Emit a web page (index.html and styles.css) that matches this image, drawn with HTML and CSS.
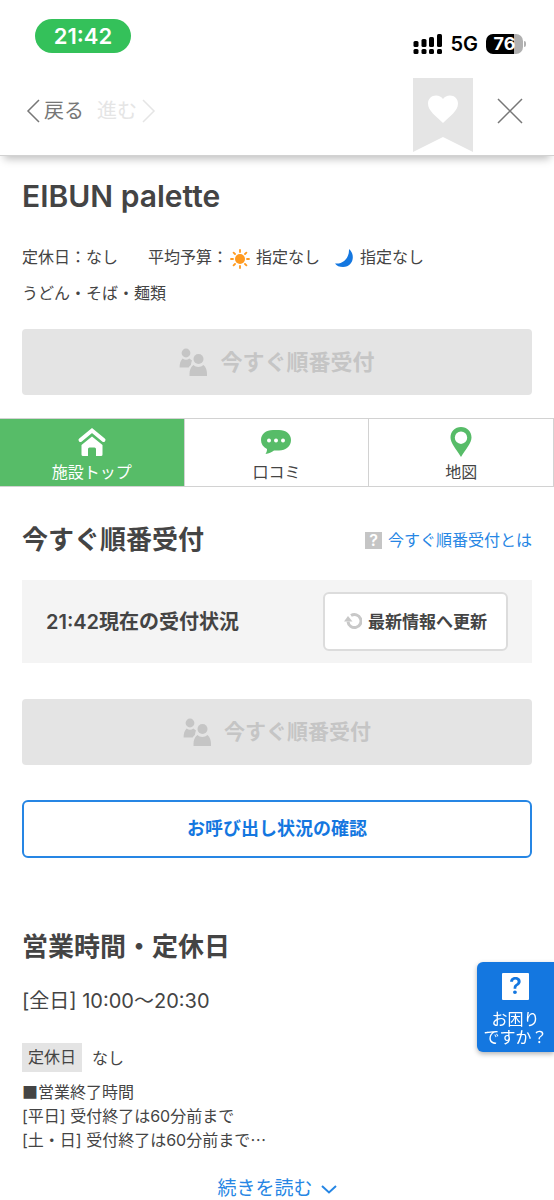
FILE: index.html
```html
<!DOCTYPE html>
<html lang="ja">
<head>
<meta charset="utf-8">
<meta name="viewport" content="width=device-width, initial-scale=1">
<title>EIBUN palette</title>
<link rel="stylesheet" href="styles.css">
</head>
<body>
<svg class="defs" aria-hidden="true">
  <symbol id="people" viewBox="0 0 28 28">
    <circle cx="7" cy="5" r="4.4"/>
    <path d="M.6 19.500c0-4 .9-7 3-9a5.500 5.500 0 0 0 6.800 0l2.600 2c-1 2.200-.8 4-1.200 4.500-1 .8-1.600 1.500-2.200 2.500z"/>
    <circle cx="19.500" cy="11" r="5"/>
    <path d="M10.500 28v-2c0-3.700 1.200-6.800 3.800-9a7.700 7.700 0 0 0 10.200 0c2.500 2.200 3.500 5.300 3.500 9v2z"/>
  </symbol>
</svg>
<header class="header">
  <div class="status">
    <span class="clock">21:42</span>
    <div class="signals">
      <svg width="30" height="21" viewBox="0 0 30 21" aria-hidden="true">
        <rect x="0.500" y="7" width="5" height="6" rx="1.500"/><rect x="8.500" y="5" width="5" height="8" rx="1.500"/><rect x="16" y="3" width="5" height="10" rx="1.500"/><rect x="24" y="0" width="5" height="13" rx="1.500"/>
        <rect x="0.500" y="15" width="5" height="5" rx="1.500"/><rect x="8.500" y="15" width="5" height="5" rx="1.500"/><rect x="16" y="15" width="5" height="5" rx="1.500"/><rect x="24" y="15" width="5" height="5" rx="1.500"/>
      </svg>
      <span class="network">5G</span>
      <span class="battery">76</span>
      <span class="battery-cap"></span>
    </div>
  </div>
  <nav class="toolbar" aria-label="ブラウザ操作">
    <button class="nav-button" type="button">
      <svg width="14" height="24" viewBox="0 0 14 24" aria-hidden="true"><path d="M13 1 2 12l11 11"/></svg>戻る
    </button>
    <button class="nav-button nav-forward" type="button" disabled>進む<svg width="14" height="24" viewBox="0 0 14 24" aria-hidden="true"><path d="m1 1 11 11L1 23"/></svg>
    </button>
    <button class="bookmark" type="button" aria-label="お気に入り">
      <svg width="60" height="74" viewBox="0 0 60 74" aria-hidden="true">
        <path fill="#e5e5e5" d="M0 0h60v74L30 59 0 74z"/>
        <path fill="#fff" d="M30 45C23 38 15 33 15 25.500 15 21 18.500 17.500 23 17.500c3 0 5.500 1.500 7 3.500 1.500-2 4-3.500 7-3.500 4.500 0 8 3.500 8 8C45 33 37 38 30 45z"/>
      </svg>
    </button>
    <button class="close" type="button" aria-label="閉じる">
      <svg width="26" height="26" viewBox="0 0 26 26" aria-hidden="true"><path d="m1 1 24 24M25 1 1 25"/></svg>
    </button>
  </nav>
</header>
<main>
  <section class="summary">
    <h1 class="shop-name">EIBUN palette</h1>
    <p class="info">
      <span class="holiday">定休日：なし</span>
      <span class="budget">平均予算：</span>
      <svg class="budget-icon" width="20" height="20" viewBox="0 0 20 20" aria-hidden="true">
        <circle cx="10" cy="10" r="5" fill="#ff9a1f"/>
        <path stroke="#ff9a1f" stroke-width="1.800" stroke-linecap="round" d="M10 1v2M10 17v2M1 10h2M17 10h2M3.600 3.600 5 5M15 15l1.400 1.400M3.600 16.400 5 15M15 5l1.400-1.400"/>
      </svg>
      <span class="lunch">指定なし</span>
      <svg class="budget-icon" width="20" height="20" viewBox="0 0 20 20" aria-hidden="true">
        <path fill="#1477e0" d="M15 0C22 6 19 18 9 18 5.500 18 2.500 17 1 14.500 9 15.500 15.500 9 15 0z"/>
      </svg>
      <span>指定なし</span>
    </p>
    <p class="genre">うどん・そば・麺類</p>
    <button class="queue-button" type="button" disabled><svg width="28" height="28" aria-hidden="true"><use href="#people"/></svg>今すぐ順番受付</button>
  </section>
  <nav class="tabs" aria-label="施設メニュー">
    <a class="tab tab-current" href="#top" aria-current="page">
      <svg width="30" height="30" viewBox="0 0 30 30" aria-hidden="true">
        <path fill="none" stroke="currentColor" stroke-width="4" stroke-linecap="round" d="M3.500 13 15 3.500l11.500 9.500"/>
        <path d="M4.500 18 15 9.500 25.500 18v9.500a1.500 1.500 0 0 1-1.500 1.500h-5v-7a1.500 1.500 0 0 0-1.500-1.500h-5a1.500 1.500 0 0 0-1.500 1.500v7H6a1.500 1.500 0 0 1-1.500-1.500z"/>
      </svg>施設トップ</a>
    <a class="tab" href="#reviews">
      <svg width="30" height="30" viewBox="0 0 30 30" aria-hidden="true">
        <path d="M12 3h6c7 0 12 4 12 10s-5 10.500-12 10.500h-5C10.500 25.500 8 26.500 4.500 27c1-1.500 1.500-3 1.500-5C2 20 0 17 0 13 0 7 5 3 12 3z"/>
        <g fill="#fff"><circle cx="8" cy="13.500" r="2"/><circle cx="15" cy="13.500" r="2"/><circle cx="22" cy="13.500" r="2"/></g>
      </svg>口コミ</a>
    <a class="tab" href="#map">
      <svg width="30" height="30" viewBox="0 0 30 30" aria-hidden="true">
        <path fill-rule="evenodd" d="M15 0c6 0 10.500 4.500 10.500 10.500C25.500 16 20 22 15 30 10 22 4.500 16 4.500 10.500 4.500 4.500 9 0 15 0zm0 4.500a6.200 6.200 0 1 0 0 12.400 6.200 6.200 0 0 0 0-12.400z"/>
      </svg>地図</a>
  </nav>
  <section class="reception" id="top">
    <div class="section-head">
      <h2>今すぐ順番受付</h2>
      <a class="help-link" href="#about"><span class="help-mark" aria-hidden="true">?</span>今すぐ順番受付とは</a>
    </div>
    <div class="state">
      <p>21:42現在の受付状況</p>
      <button class="refresh" type="button">
        <svg width="18" height="17" viewBox="0 0 18 17" aria-hidden="true"><path fill="none" stroke="#c8c8c8" stroke-width="3" d="M7 2.600a6.500 6.500 0 1 1-3 6"/><path fill="#c8c8c8" d="M0 8.500 4 3l4.500 5.500z"/></svg>最新情報へ更新
      </button>
    </div>
    <button class="queue-button queue-button-small" type="button" disabled><svg width="28" height="28" aria-hidden="true"><use href="#people"/></svg>今すぐ順番受付</button>
    <button class="call-button" type="button">お呼び出し状況の確認</button>
  </section>
  <section class="hours">
    <h2>営業時間・定休日</h2>
    <p class="time">[全日] 10:00～20:30</p>
    <p class="closed"><span class="tag">定休日</span>なし</p>
    <p class="notes"><span class="symbol">■</span>営業終了時間<br>[平日] 受付終了は60分前まで<br>[土・日] 受付終了は60分前まで<span class="symbol">…</span></p>
    <a class="more" href="#hours">続きを読む<svg width="16" height="9" viewBox="0 0 16 9" aria-hidden="true"><path d="m1 1 7 6.500L15 1"/></svg></a>
  </section>
</main>
<button class="support" type="button"><span class="support-mark" aria-hidden="true">?</span><span>お困り<br>ですか？</span></button>
</body>
</html>
```

FILE: styles.css
```css
* { box-sizing: border-box; }
html { overflow: hidden; }
body {
  margin: 0;
  background: #fff;
  color: #444;
  font: 16px/24px Inter, "Noto Sans CJK JP", sans-serif;
}
h1, h2, p { margin: 0; }
button { margin: 0; padding: 0; border: 0; background: none; color: inherit; font: inherit; }
a { color: inherit; text-decoration: none; }
svg { display: block; flex: none; }
.defs { position: absolute; width: 0; height: 0; }

.header {
  position: relative;
  height: 156px;
  border-bottom: 1px solid #d2d2d2;
  box-shadow: 0 7px 8px -4px rgba(0, 0, 0, .25);
  background: #fff;
}
.status { display: flex; justify-content: space-between; height: 53px; padding: 19px 30px 0 35px; }
.clock {
  width: 96px;
  height: 34px;
  border-radius: 17px;
  background: #34c15a;
  color: #fff;
  font-size: 22px;
  font-weight: 600;
  line-height: 34px;
  text-align: center;
}
.signals { display: flex; align-items: center; padding-top: 16px; color: #000; }
.network { margin: 0 8px 0 7px; font-size: 20px; font-weight: 600; }
.battery {
  width: 37px;
  height: 20px;
  border-radius: 7px;
  background: linear-gradient(90deg, #000 76%, #b0b0b0 76%);
  color: #fff;
  font-size: 18px;
  font-weight: 700;
  line-height: 20px;
  text-align: center;
}
.battery-cap { width: 2px; height: 6px; margin-left: 1px; margin-right: -2px; border-radius: 0 2px 2px 0; background: #b0b0b0; }
.toolbar { display: flex; align-items: center; padding: 25px 31px 0 26px; font-size: 20px; color: #777; }
.nav-button { display: flex; align-items: center; gap: 4px; height: 24px; margin-bottom: 8px; }
.nav-button svg, .close svg, .more svg { fill: none; stroke: currentColor; stroke-width: 2; }
.nav-button svg, .close svg { stroke-width: 1.500; }
.nav-forward { gap: 5px; margin-left: 13px; color: #e5e5e5; }
.bookmark { margin-left: auto; }
.close { margin: 0 0 8px 24px; }

.summary { padding: 24px 22px 23px; }
.shop-name { font-size: 30px; font-weight: 600; line-height: 32px; }
.info { display: flex; align-items: center; margin-top: 33px; }
.holiday { margin-right: 30px; }
.budget { margin-right: 2px; }
.budget-icon { margin: 4px 6px 0 0; }
.lunch { margin-right: 14px; }
.genre { margin: 12px 0 24px; }
.queue-button {
  display: flex;
  align-items: center;
  justify-content: center;
  gap: 13px;
  width: 100%;
  height: 66px;
  border-radius: 4px;
  background: #e4e4e4;
  color: #c5c5c5;
  font-size: 22px;
  font-weight: 700;
}
.queue-button svg { fill: currentColor; }
.queue-button-small { font-size: 21px; }

.tabs { display: grid; grid-template-columns: repeat(3, 1fr); border: solid #d2d2d2; border-width: 1px 0; }
.tab {
  display: flex;
  flex-direction: column;
  align-items: center;
  gap: 3px;
  height: 67px;
  padding-top: 8px;
  border-right: 1px solid #d2d2d2;
}
.tab svg { fill: #57bc68; }
.tab-current { background: #57bc68; color: #fff; }
.tab-current svg { fill: #fff; }

.reception { padding: 37px 22px 0; }
h2 { font-size: 26px; font-weight: 700; line-height: 32px; }
.section-head { display: flex; align-items: center; justify-content: space-between; }
.help-link { display: flex; align-items: center; gap: 6px; color: #2686e4; }
.help-mark { width: 17px; height: 17px; background: #c5c5c5; color: #fff; font-weight: 600; line-height: 17px; text-align: center; }
.state {
  display: flex;
  align-items: center;
  justify-content: space-between;
  margin: 24px 0 36px;
  padding: 12px 24px;
  background: #f4f4f4;
  font-size: 20px;
  font-weight: 600;
}
.refresh {
  display: flex;
  align-items: center;
  justify-content: center;
  gap: 6px;
  width: 185px;
  height: 59px;
  border: 2px solid #dcdcdc;
  border-radius: 6px;
  background: #fff;
  font-size: 17px;
  font-weight: 700;
}
.call-button {
  width: 100%;
  height: 58px;
  margin-top: 35px;
  border: 2px solid #2686e4;
  border-radius: 6px;
  background: #fff;
  color: #1477e0;
  font-size: 18px;
  font-weight: 700;
}

.hours { padding: 73px 22px 0; }
.time { margin-top: 26px; font-size: 20px; }
.closed { display: flex; align-items: center; gap: 10px; margin-top: 30px; }
.tag { padding: 3px 6px; background: #e4e4e4; line-height: 23px; }
.notes { margin-top: 8px; }
.symbol { font-family: "Noto Sans CJK JP", sans-serif; line-height: 16px; }
.more { display: flex; align-items: center; justify-content: center; gap: 8px; margin-top: 25px; color: #2686e4; font-size: 19px; }

.support {
  position: fixed;
  right: 0;
  bottom: 148px;
  display: flex;
  flex-direction: column;
  align-items: center;
  gap: 10px;
  width: 77px;
  height: 90px;
  padding-top: 11px;
  border-radius: 6px 0 0 6px;
  background: #1477e0;
  box-shadow: 0 2px 5px rgba(0, 0, 0, .3);
  color: #fff;
  line-height: 18px;
}
.support-mark { width: 27px; height: 27px; border-radius: 1px; background: #fff; color: #1477e0; font-size: 23px; font-weight: 600; line-height: 27px; }
```
